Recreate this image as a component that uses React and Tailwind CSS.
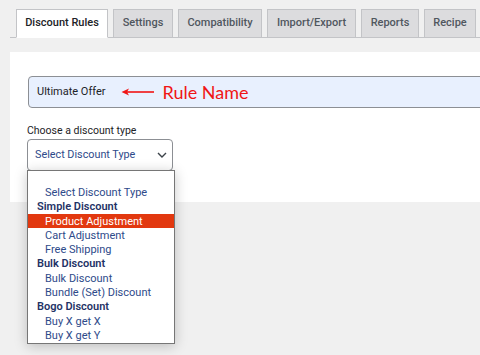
import React from "react";

const tabs = [
  { label: "Discount Rules", w: "w-[92px]" },
  { label: "Settings", w: "w-[60px]" },
  { label: "Compatibility", w: "w-[84px]" },
  { label: "Import/Export", w: "w-[89px]" },
  { label: "Reports", w: "w-[58px]" },
  { label: "Recipe", w: "w-[52px]" },
];

const options = [
  { label: "", type: "blank" },
  { label: "Select Discount Type", type: "item" },
  { label: "Simple Discount", type: "group" },
  { label: "Product Adjustment", type: "item", active: true },
  { label: "Cart Adjustment", type: "item" },
  { label: "Free Shipping", type: "item" },
  { label: "Bulk Discount", type: "group" },
  { label: "Bulk Discount", type: "item" },
  { label: "Bundle (Set) Discount", type: "item" },
  { label: "Bogo Discount", type: "group" },
  { label: "Buy X get X", type: "item" },
  { label: "Buy X get Y", type: "item" },
];

const App = () => {
  return (
    <div className="w-[480px] h-[355px] overflow-hidden bg-[#f0f0f0] font-['Roboto',sans-serif]">
      <div className="pl-[10px] pt-[9px]">
        <div className="flex gap-[5px] pl-[6px] border-b border-[#c3c4c7] h-[29px]">
          {tabs.map((tab, i) => (
            <div
              key={tab.label}
              className={`${tab.w} shrink-0 px-0 flex items-center justify-center border border-[#c3c4c7] text-[11px] font-medium whitespace-nowrap ${
                i === 0
                  ? "h-[29px] bg-white text-[#1d2327] border-b-white"
                  : "h-[28px] bg-[#dcdcde] text-[#50575e] border-b-0"
              }`}
            >
              {tab.label}
            </div>
          ))}
        </div>

        <div className="mt-[14px] bg-white w-[620px] h-[150px] pt-[24px] pl-[18px] relative">
          <div className="h-[32px] w-[560px] bg-[#e8f0fe] border border-[#8c8f94] rounded-[4px] flex items-center pl-[8px]">
            <span className="text-[11px] text-[#1d2327]">Ultimate Offer</span>
            <svg width="34" height="10" viewBox="0 0 34 10" className="ml-[15px]">
              <line x1="3" y1="5" x2="33" y2="5" stroke="#f01515" strokeWidth="1.6" />
              <path d="M0.5 5 L8 1.5 L6 5 L8 8.5 Z" fill="#f01515" />
            </svg>
            <span className="ml-[8px] text-[18px] text-[#f01515] font-['Lato',sans-serif] leading-none">
              Rule Name
            </span>
          </div>

          <div className="mt-[16px] -ml-px text-[10.5px] text-[#1d2327] leading-[13px]">
            Choose a discount type
          </div>
          <div className="mt-[2px] -ml-px w-[146px] h-[32px] border border-[#8c8f94] rounded-[4px] flex items-center justify-between pl-[7px] pr-[5px]">
            <span className="text-[10.8px] text-[#2e4a8a]">Select Discount Type</span>
            <svg width="10" height="6" viewBox="0 0 10 6">
              <path d="M1 1 L5 5 L9 1" stroke="#3c434a" strokeWidth="1.4" fill="none" />
            </svg>
          </div>

          <div className="absolute left-[17px] top-[118px] w-[148px] border border-[#767676] bg-white shadow-[0_2px_12px_rgba(0,0,0,0.22)] z-10">
            {options.map((opt, i) => (
              <div
                key={i}
                className={`h-[14.3px] flex items-center text-[11px] leading-none whitespace-nowrap ${
                  opt.type === "group"
                    ? "pl-[9px] font-semibold text-[#1f3366]"
                    : "pl-[17px]"
                } ${opt.active ? "bg-[#e2380f] text-white" : opt.type === "item" ? "text-[#2e4a8a]" : ""}`}
              >
                {opt.label}
              </div>
            ))}
          </div>
        </div>
      </div>
    </div>
  );
};

export default App;
